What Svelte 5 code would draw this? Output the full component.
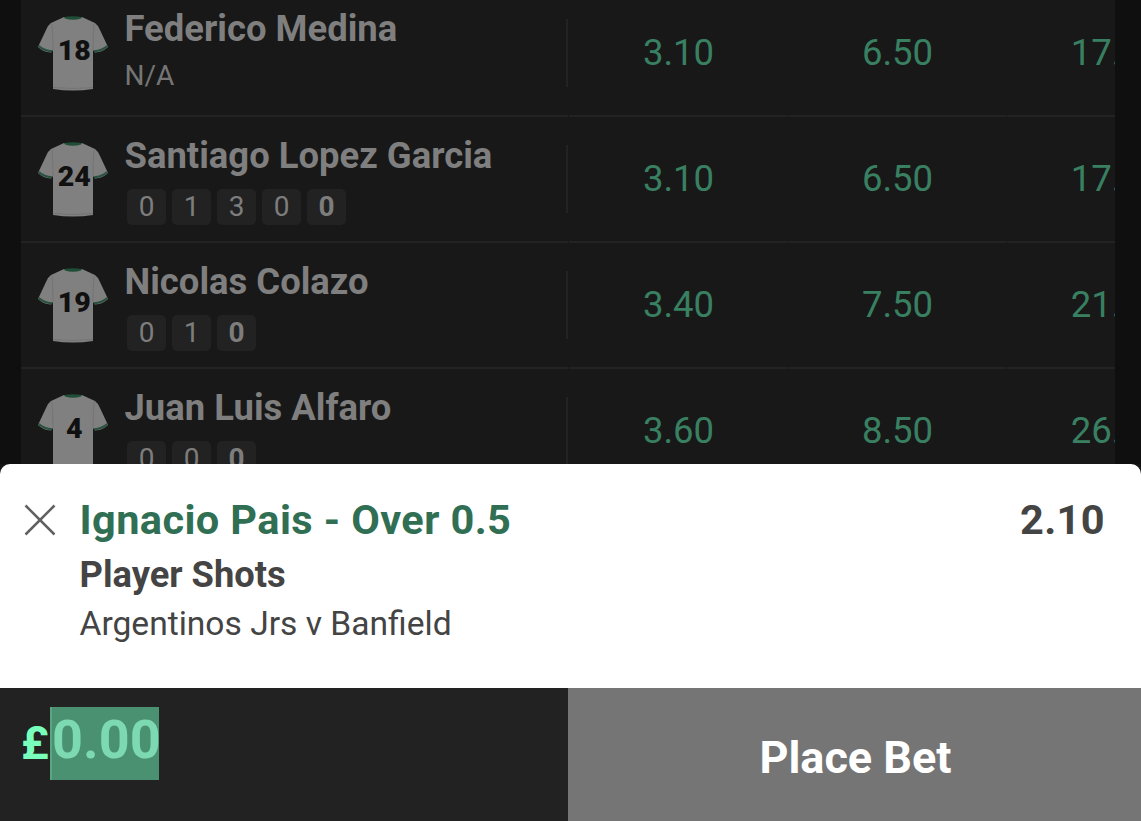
<script lang="ts">
	interface Player {
		shirt: number;
		name: string;
		form: number[];
		odds: string[];
	}

	const players: Player[] = [
		{ shirt: 18, name: 'Federico Medina', form: [], odds: ['3.10', '6.50', '17.00'] },
		{ shirt: 24, name: 'Santiago Lopez Garcia', form: [0, 1, 3, 0, 0], odds: ['3.10', '6.50', '17.00'] },
		{ shirt: 19, name: 'Nicolas Colazo', form: [0, 1, 0], odds: ['3.40', '7.50', '21.00'] },
		{ shirt: 4, name: 'Juan Luis Alfaro', form: [0, 0, 0], odds: ['3.60', '8.50', '26.00'] }
	];

	let stake = $state('0.00');
</script>

<div class="page">
	<div class="market">
		{#each players as player}
			<div class="row">
				<div class="player">
					<svg class="shirt" viewBox="0 0 70 76" width="70" height="76">
						<path
							d="M26 1 Q35 3 44 1 L57 7 Q60 9 62 14 L70 31 Q65 36 57 36.5 L55 34 V73 Q35 76 15 73 V34 L13 36.5 Q5 36 0 31 L8 14 Q10 9 13 7 Z"
							fill="#808080"
						/>
						<path d="M26 1 Q35 -0.5 44 1 L43 2.5 Q35 5 27 2.5 Z" fill="#1f4d38" />
						<path
							d="M0.8 30 Q6 35 14 35.3 M69.2 30 Q64 35 56 35.3"
							fill="none"
							stroke="#28513f"
							stroke-width="2"
						/>
						<path
							d="M14 8 Q15 20 15 34 M56 8 Q55 20 55 34 M15 71.5 Q35 73.5 55 71.5"
							fill="none"
							stroke="#747474"
							stroke-width="1"
						/>
						<text x="36.3" y="43.7" text-anchor="middle">{player.shirt}</text>
					</svg>
					<div class="details">
						<div class="name">{player.name}</div>
						{#if player.form.length}
							<div class="form">
								{#each player.form as shots, i}
									<span class:latest={i === player.form.length - 1}>{shots}</span>
								{/each}
							</div>
						{:else}
							<div class="no-form">N/A</div>
						{/if}
					</div>
				</div>
				{#each player.odds as price}
					<div class="odds">{price}</div>
				{/each}
			</div>
		{/each}
	</div>

	<section class="betslip">
		<div class="selection">
			<button class="remove" aria-label="Remove">
				<svg viewBox="0 0 32 32" width="32" height="32">
					<path d="M1.5 1.5 30.5 30.5 M30.5 1.5 1.5 30.5" stroke="#606060" stroke-width="2.5" />
				</svg>
			</button>
			<div class="bet">
				<div class="title">Ignacio Pais - Over 0.5</div>
				<div class="market-name">Player Shots</div>
				<div class="event">Argentinos Jrs v Banfield</div>
			</div>
			<div class="price">2.10</div>
		</div>
		<div class="actions">
			<div class="stake">
				<span class="currency">£</span><span class="amount">{stake}</span>
			</div>
			<button class="place">Place Bet</button>
		</div>
	</section>
</div>

<style>
	:global(body) {
		margin: 0;
		overflow: hidden;
	}

	.page {
		width: 1141px;
		height: 821px;
		display: flex;
		flex-direction: column;
		overflow: hidden;
		background: #0f0f0f;
		font-family: Roboto, sans-serif;
	}

	button {
		border: 0;
		padding: 0;
		background: none;
		font: inherit;
	}

	.market {
		height: 464px;
		flex: none;
		margin: 0 26px 0 21px;
		display: flex;
		flex-direction: column;
		justify-content: flex-start;
		overflow: hidden;
		background: #181818;
	}

	.row {
		display: grid;
		grid-template-columns: 547px repeat(3, 218px);
		column-gap: 1px;
		height: 126px;
		flex: none;
	}

	.row:first-child {
		margin-top: -9px;
	}

	.player,
	.odds {
		box-sizing: border-box;
		border-bottom: 2px solid #232323;
	}

	.player {
		display: flex;
		padding-left: 17px;
		background: linear-gradient(#232323, #232323) right 0 top 28px / 2px 68px no-repeat;
	}

	.shirt {
		flex: none;
		margin-top: 25px;
	}

	.shirt text {
		font: 900 28.5px Roboto, sans-serif;
		fill: #101010;
	}

	.details {
		margin-left: 16.5px;
		padding-top: 17px;
	}

	.row:first-child .details {
		padding-top: 16px;
	}

	.name {
		font-size: 36.45px;
		font-weight: 700;
		line-height: 44px;
		color: #7f7f7f;
		white-space: nowrap;
	}

	.form {
		display: flex;
		gap: 6px;
		margin: 11px 0 0 2.5px;
	}

	.form span {
		width: 39px;
		height: 36px;
		border-radius: 5px;
		background: #222;
		color: #7d7d7d;
		font-size: 28px;
		line-height: 36px;
		text-align: center;
	}

	.form .latest {
		font-weight: 700;
	}

	.no-form {
		margin-top: 8px;
		font-size: 28px;
		line-height: 34px;
		color: #757575;
	}

	.odds {
		display: flex;
		align-items: center;
		justify-content: center;
		padding: 0 0 2px 1px;
		color: #388061;
		font-size: 36.5px;
	}

	.betslip {
		flex: 1;
		display: flex;
		flex-direction: column;
		background: #151515;
	}

	.selection {
		height: 224px;
		box-sizing: border-box;
		display: flex;
		align-items: flex-start;
		padding: 31px 36px 0 24px;
		border-radius: 10px 10px 0 0;
		background: #fff;
		color: #444;
	}

	.remove {
		display: flex;
		margin-top: 9px;
	}

	.bet {
		flex: 1;
		margin-left: 23.5px;
		white-space: nowrap;
	}

	.title {
		color: #306f53;
		font-size: 41.5px;
		font-weight: 700;
		line-height: 50px;
		letter-spacing: 0.4px;
	}

	.market-name {
		margin-top: 7px;
		font-size: 36.3px;
		font-weight: 700;
		line-height: 46px;
	}

	.event {
		margin-top: 5px;
		font-size: 33.6px;
		line-height: 42px;
	}

	.price {
		font-size: 41.5px;
		font-weight: 700;
		line-height: 50px;
		letter-spacing: 0.4px;
	}

	.actions {
		flex: 1;
		display: grid;
		grid-template-columns: 568px 1fr;
	}

	.stake {
		display: flex;
		align-items: flex-start;
		padding: 19px 0 0 22px;
		background: #222;
		color: #77ffbb;
		font-weight: 700;
	}

	.currency {
		width: 28px;
		margin-left: -1px;
		padding-right: 1px;
		font-size: 47px;
		line-height: 72px;
	}

	.amount {
		height: 73px;
		box-sizing: border-box;
		width: 109px;
		border-left: 2px solid #5ba583;
		background: #4a9172;
		color: #7cd9b2;
		font-size: 54px;
		line-height: 66px;
	}

	.place {
		padding: 6px 0 0 2px;
		background: #757575;
		color: #fff;
		font-size: 45px;
		font-weight: 700;
	}
</style>
